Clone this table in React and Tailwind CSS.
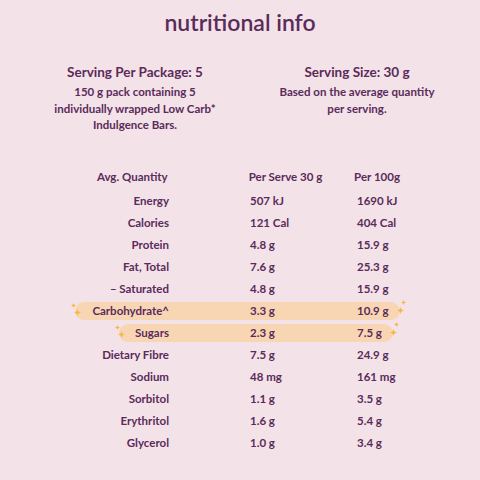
const rows = [
  { label: 'Energy', serve: '507 kJ', per100: '1690 kJ' },
  { label: 'Calories', serve: '121 Cal', per100: '404 Cal' },
  { label: 'Protein', serve: '4.8 g', per100: '15.9 g' },
  { label: 'Fat, Total', serve: '7.6 g', per100: '25.3 g' },
  { label: '– Saturated', serve: '4.8 g', per100: '15.9 g' },
  { label: 'Carbohydrate^', serve: '3.3 g', per100: '10.9 g', pill: 'carb' },
  { label: 'Sugars', serve: '2.3 g', per100: '7.5 g', pill: 'sugar' },
  { label: 'Dietary Fibre', serve: '7.5 g', per100: '24.9 g' },
  { label: 'Sodium', serve: '48 mg', per100: '161 mg' },
  { label: 'Sorbitol', serve: '1.1 g', per100: '3.5 g' },
  { label: 'Erythritol', serve: '1.6 g', per100: '5.4 g' },
  { label: 'Glycerol', serve: '1.0 g', per100: '3.4 g' },
];

const Sparkle = ({ size, className }) => (
  <svg width={size} height={size} viewBox="0 0 10 10" className={className}>
    <path d="M5 0 Q5.6 4.4 10 5 Q5.6 5.6 5 10 Q4.4 5.6 0 5 Q4.4 4.4 5 0Z" fill="#f5b844" />
  </svg>
);

const Sparkles = () => (
  <>
    <Sparkle size={5} className="absolute -left-[4px] top-[1px]" />
    <Sparkle size={7} className="absolute -left-[1px] top-[7px]" />
    <Sparkle size={5} className="absolute -right-[6px] -top-[2px]" />
    <Sparkle size={7} className="absolute -right-[4px] top-[5px]" />
  </>
);

const Row = ({ row }) => {
  const isCarb = row.pill === 'carb';
  const isSugar = row.pill === 'sugar';
  const wrap = isCarb
    ? 'ml-[75px] w-[325px] bg-[#f8d6b4] rounded-full'
    : isSugar
    ? 'ml-[119px] w-[274px] bg-[#f8d6b4] rounded-full'
    : 'ml-[75px] w-[325px]';
  const labelW = isSugar ? 'w-[50px]' : 'w-[94px]';
  return (
    <div className="h-[22px] flex items-center">
      <div className={`relative h-[18px] flex items-center whitespace-nowrap ${wrap}`}>
        {row.pill && <Sparkles />}
        <div className={`${labelW} text-right`}>{row.label}</div>
        <div className="ml-[81px] w-[107px]">{row.serve}</div>
        <div>{row.per100}</div>
      </div>
    </div>
  );
};

export default function App() {
  return (
    <div
      className="w-[480px] h-[480px] bg-[#f3e2e7] text-[#5a2b5b] overflow-hidden"
      style={{ fontFamily: 'Lato, "Open Sans", sans-serif' }}
    >
      {/* Title */}
      <h1 className="pt-[6px] text-center text-[23px] leading-[32px] font-semibold">nutritional info</h1>

      {/* Serving info */}
      <div className="ml-6 w-[444px] grid grid-cols-2 mt-[24px]">
        <div className="text-center">
          <div className="text-[13.5px] leading-[20px] font-bold">Serving Per Package: 5</div>
          <p className="mt-[2px] text-[11.5px] leading-[16.5px] font-bold">
            150 g pack containing 5<br />
            individually wrapped Low Carb*<br />
            Indulgence Bars.
          </p>
        </div>
        <div className="text-center">
          <div className="text-[13.5px] leading-[20px] font-bold">Serving Size: 30 g</div>
          <p className="mt-[2px] text-[11.5px] leading-[16.5px] font-bold">
            Based on the average quantity<br />
            per serving.
          </p>
        </div>
      </div>

      {/* Table */}
      <div className="mt-[32px] text-[11.5px] font-bold">
        <div className="h-[22px] flex items-center">
          <div className="ml-[75px] w-[325px] flex items-center whitespace-nowrap">
            <div className="w-[94px] text-right">Avg. Quantity</div>
            <div className="ml-[81px] w-[107px]">Per Serve 30 g</div>
            <div>Per 100g</div>
          </div>
        </div>
        <div className="mt-[2px]">
          {rows.map((r) => (
            <Row key={r.label} row={r} />
          ))}
        </div>
      </div>
    </div>
  );
}
